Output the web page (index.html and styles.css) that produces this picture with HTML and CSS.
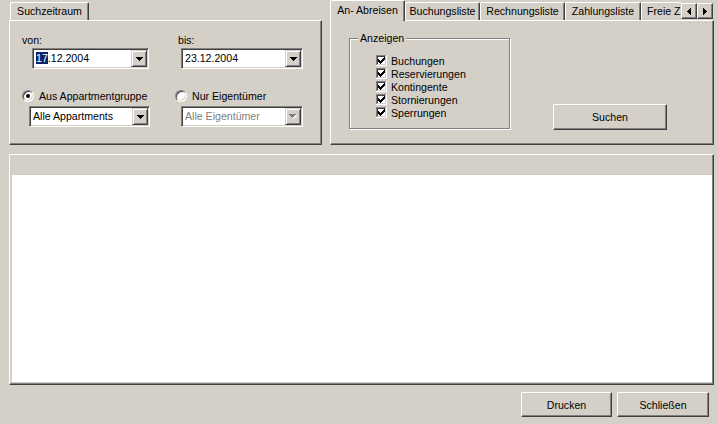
FILE: index.html
```html
<!DOCTYPE html>
<html>
<head>
<meta charset="utf-8">
<link rel="stylesheet" href="styles.css">
</head>
<body>
<div class="app">
  <div class="top">
    <div class="left-col">
      <div class="ltabstrip">
        <div class="tab ltab">Suchzeitraum</div>
      </div>
      <div class="panel left-panel">
        <div class="col col1">
          <div class="lbl lbl1">von:</div>
          <div class="combo c1">
            <span class="val"><span class="sel">17</span>.12.2004</span>
            <span class="dd"><svg width="7" height="4" viewBox="0 0 7 4" shape-rendering="crispEdges"><path d="M0 0h7v1H0zM1 1h5v1H1zM2 2h3v1H2zM3 3h1v1H3z" fill="#000"/></svg></span>
          </div>
          <div class="radio r1"><span class="rb on"></span><span class="rtext">Aus Appartmentgruppe</span></div>
          <div class="combo c3">
            <span class="val">Alle Appartments</span>
            <span class="dd"><svg width="7" height="4" viewBox="0 0 7 4" shape-rendering="crispEdges"><path d="M0 0h7v1H0zM1 1h5v1H1zM2 2h3v1H2zM3 3h1v1H3z" fill="#000"/></svg></span>
          </div>
        </div>
        <div class="col col2">
          <div class="lbl lbl2">bis:</div>
          <div class="combo c2">
            <span class="val">23.12.2004</span>
            <span class="dd"><svg width="7" height="4" viewBox="0 0 7 4" shape-rendering="crispEdges"><path d="M0 0h7v1H0zM1 1h5v1H1zM2 2h3v1H2zM3 3h1v1H3z" fill="#000"/></svg></span>
          </div>
          <div class="radio r2"><span class="rb"></span><span class="rtext">Nur Eigentümer</span></div>
          <div class="combo c4 disabled">
            <span class="val">Alle Eigentümer</span>
            <span class="dd"><svg width="8" height="5" viewBox="0 0 8 5" shape-rendering="crispEdges"><path d="M1 1h7v1H1zM2 2h5v1H2zM3 3h3v1H3zM4 4h1v1H4z" fill="#fff"/><path d="M0 0h7v1H0zM1 1h5v1H1zM2 2h3v1H2zM3 3h1v1H3z" fill="#808080"/></svg></span>
          </div>
        </div>
      </div>
    </div>
    <div class="right-col">
      <div class="rtabstrip">
        <div class="rtabs">
          <div class="tab rtab selected w75">An- Abreisen</div>
          <div class="tab rtab w75">Buchungsliste</div>
          <div class="tab rtab w85">Rechnungsliste</div>
          <div class="tab rtab w76">Zahlungsliste</div>
          <div class="tab rtab last">Freie Z</div>
        </div>
        <div class="arrows">
          <span class="arr"><svg width="4" height="7" viewBox="0 0 4 7" shape-rendering="crispEdges"><path d="M0 3h1v1H0zM1 2h1v3H1zM2 1h1v5H2zM3 0h1v7H3z" fill="#000"/></svg></span>
          <span class="arr"><svg width="4" height="7" viewBox="0 0 4 7" shape-rendering="crispEdges"><path d="M3 3h1v1H3zM2 2h1v3H2zM1 1h1v5H1zM0 0h1v7H0z" fill="#000"/></svg></span>
        </div>
      </div>
      <div class="panel right-panel">
        <div class="group">
          <span class="glabel">Anzeigen</span>
          <div class="cb"><svg width="11" height="11" viewBox="0 0 11 11" shape-rendering="crispEdges"><rect width="11" height="11" fill="#fff"/><path d="M0 0h10v1H1v9H0z" fill="#808080"/><path d="M1 1h8v1H2v7H1z" fill="#404040"/><path d="M9 1h1v9H1V9h8z" fill="#d4d0c8"/><path d="M2 4h1v3H2zM3 5h1v3H3zM4 6h1v3H4zM5 5h1v3H5zM6 4h1v3H6zM7 3h1v3H7zM8 2h1v3H8z" fill="#000"/></svg><span>Buchungen</span></div>
          <div class="cb"><svg width="11" height="11" viewBox="0 0 11 11" shape-rendering="crispEdges"><rect width="11" height="11" fill="#fff"/><path d="M0 0h10v1H1v9H0z" fill="#808080"/><path d="M1 1h8v1H2v7H1z" fill="#404040"/><path d="M9 1h1v9H1V9h8z" fill="#d4d0c8"/><path d="M2 4h1v3H2zM3 5h1v3H3zM4 6h1v3H4zM5 5h1v3H5zM6 4h1v3H6zM7 3h1v3H7zM8 2h1v3H8z" fill="#000"/></svg><span>Reservierungen</span></div>
          <div class="cb"><svg width="11" height="11" viewBox="0 0 11 11" shape-rendering="crispEdges"><rect width="11" height="11" fill="#fff"/><path d="M0 0h10v1H1v9H0z" fill="#808080"/><path d="M1 1h8v1H2v7H1z" fill="#404040"/><path d="M9 1h1v9H1V9h8z" fill="#d4d0c8"/><path d="M2 4h1v3H2zM3 5h1v3H3zM4 6h1v3H4zM5 5h1v3H5zM6 4h1v3H6zM7 3h1v3H7zM8 2h1v3H8z" fill="#000"/></svg><span>Kontingente</span></div>
          <div class="cb"><svg width="11" height="11" viewBox="0 0 11 11" shape-rendering="crispEdges"><rect width="11" height="11" fill="#fff"/><path d="M0 0h10v1H1v9H0z" fill="#808080"/><path d="M1 1h8v1H2v7H1z" fill="#404040"/><path d="M9 1h1v9H1V9h8z" fill="#d4d0c8"/><path d="M2 4h1v3H2zM3 5h1v3H3zM4 6h1v3H4zM5 5h1v3H5zM6 4h1v3H6zM7 3h1v3H7zM8 2h1v3H8z" fill="#000"/></svg><span>Stornierungen</span></div>
          <div class="cb"><svg width="11" height="11" viewBox="0 0 11 11" shape-rendering="crispEdges"><rect width="11" height="11" fill="#fff"/><path d="M0 0h10v1H1v9H0z" fill="#808080"/><path d="M1 1h8v1H2v7H1z" fill="#404040"/><path d="M9 1h1v9H1V9h8z" fill="#d4d0c8"/><path d="M2 4h1v3H2zM3 5h1v3H3zM4 6h1v3H4zM5 5h1v3H5zM6 4h1v3H6zM7 3h1v3H7zM8 2h1v3H8z" fill="#000"/></svg><span>Sperrungen</span></div>
        </div>
        <div class="btn suchen">Suchen</div>
      </div>
    </div>
  </div>
  <div class="panel main">
    <div class="list"></div>
  </div>
  <div class="buttons">
    <div class="btn drucken">Drucken</div>
    <div class="btn schliessen">Schließen</div>
  </div>
</div>
</body>
</html>
```
FILE: styles.css
```css
* { box-sizing: border-box; }
html, body { margin: 0; padding: 0; }
body {
  width: 718px;
  height: 424px;
  overflow: hidden;
  background: #d4d0c8;
  font-family: "Liberation Sans", Arial, sans-serif;
  font-size: 10.6px;
  color: #000;
}
.app { padding-left: 9px; width: 718px; }
.top { display: flex; height: 145px; }

/* tabs */
.tab {
  flex: none;
  height: 18px;
  line-height: 16px;
  text-align: center;
  white-space: nowrap;
  border-top: 1px solid #fff;
  border-left: 1px solid #fff;
  border-right: 1px solid #404040;
  box-shadow: inset -1px 0 #808080;
  border-radius: 2px 2px 0 0;
  background: #d4d0c8;
}
.left-col { width: 313px; }
.ltabstrip { height: 20px; padding-top: 2px; padding-left: 1px; display: flex; }
.ltab { width: 79px; }

.right-col { width: 384px; margin-left: 8px; }
.rtabstrip {
  height: 21px;
  display: flex;
  margin-bottom: -1px;
  position: relative;
  z-index: 1;
}
.rtabs { width: 351px; display: flex; overflow: hidden; align-items: flex-start; }
.rtab { margin-top: 2px; }
.rtab.selected { margin-top: 0; height: 21px; line-height: 18px; }
.w75 { width: 75px; }
.w76 { width: 76px; }
.w85 { width: 85px; }
.rtab.last { width: 60px; text-align: left; padding-left: 5px; }
.arrows { display: flex; margin-top: 3px; }
.arr {
  width: 16px;
  height: 16px;
  display: flex;
  align-items: center;
  justify-content: center;
  border: 1px solid;
  border-color: #fff #404040 #404040 #fff;
  box-shadow: inset -1px -1px #808080;
  background: #d4d0c8;
}

/* panels */
.panel {
  border-top: 1px solid #fff;
  border-left: 1px solid #fff;
  border-right: 1px solid #404040;
  border-bottom: 1px solid #404040;
  box-shadow: inset -1px -1px #808080;
}
.left-panel { height: 125px; display: flex; padding-top: 13px; }
.col { display: flex; flex-direction: column; align-items: flex-start; }
.col1 { width: 156px; }
.col2 { width: 150px; }
.lbl { height: 13px; line-height: 13px; margin-left: 12px; }

.combo {
  height: 21px;
  margin-top: 1px;
  display: flex;
  background: #fff;
  border: 1px solid;
  border-color: #808080 #fff #fff #808080;
  box-shadow: inset 1px 1px #404040, inset -1px -1px #d4d0c8;
  padding: 1px;
}
.c1 { margin-left: 22px; width: 117px; }
.c2 { margin-left: 15px; width: 122px; }
.c3 { margin-left: 19px; width: 121px; margin-top: 4px; }
.c4 { margin-left: 15px; width: 122px; margin-top: 4px; }
.val { flex: 1; line-height: 17px; padding-left: 2px; white-space: nowrap; overflow: hidden; }
.sel { background: #0a246a; color: #fff; }
.disabled .val { color: #808080; }
.dd {
  width: 16px;
  height: 17px;
  display: flex;
  align-items: center;
  justify-content: center;
  background: #d4d0c8;
  border: 1px solid;
  border-color: #d4d0c8 #404040 #404040 #d4d0c8;
  box-shadow: inset 1px 1px #fff, inset -1px -1px #808080;
}

.radio { display: flex; align-items: center; height: 13px; margin-top: 20px; }
.r1 { margin-left: 12px; }
.r2 { margin-left: 9px; }
.rb {
  position: relative;
  width: 12px;
  height: 12px;
  border-radius: 50%;
  background: #fff;
  border: 1px solid;
  border-color: #808080 #fff #fff #808080;
  box-shadow: inset 1px 1px #404040, inset -1px -1px #d4d0c8;
}
.rb.on::after {
  content: "";
  position: absolute;
  left: 3px;
  top: 3px;
  width: 4px;
  height: 4px;
  border-radius: 50%;
  background: #000;
}
.rtext { margin-left: 5px; white-space: nowrap; }

.right-panel { height: 125px; display: flex; align-items: flex-start; }
.group {
  position: relative;
  margin: 17px 0 0 18px;
  width: 161px;
  height: 91px;
  border: 1px solid #808080;
  box-shadow: inset 1px 1px #fff, 1px 1px #fff;
  padding: 15px 0 0 26px;
}
.glabel {
  position: absolute;
  top: -7px;
  left: 8px;
  padding: 0 2px;
  line-height: 13px;
  background: #d4d0c8;
}
.cb { display: flex; align-items: center; height: 13px; }
.cb svg { margin-right: 4px; }

.btn {
  display: flex;
  align-items: center;
  justify-content: center;
  background: #d4d0c8;
  border: 1px solid;
  border-color: #fff #404040 #404040 #fff;
  box-shadow: inset -1px -1px #808080;
}
.suchen { margin: 83px 0 0 43px; width: 114px; height: 26px; }

.main { margin-top: 9px; width: 705px; height: 231px; padding: 20px 1px 2px 2px; }
.list { background: #fff; height: 207px; }

.buttons {
  display: flex;
  justify-content: flex-end;
  gap: 5px;
  margin-top: 7px;
  width: 705px;
  padding-right: 5px;
}
.drucken { width: 91px; height: 25px; }
.schliessen { width: 92px; height: 25px; }
```
